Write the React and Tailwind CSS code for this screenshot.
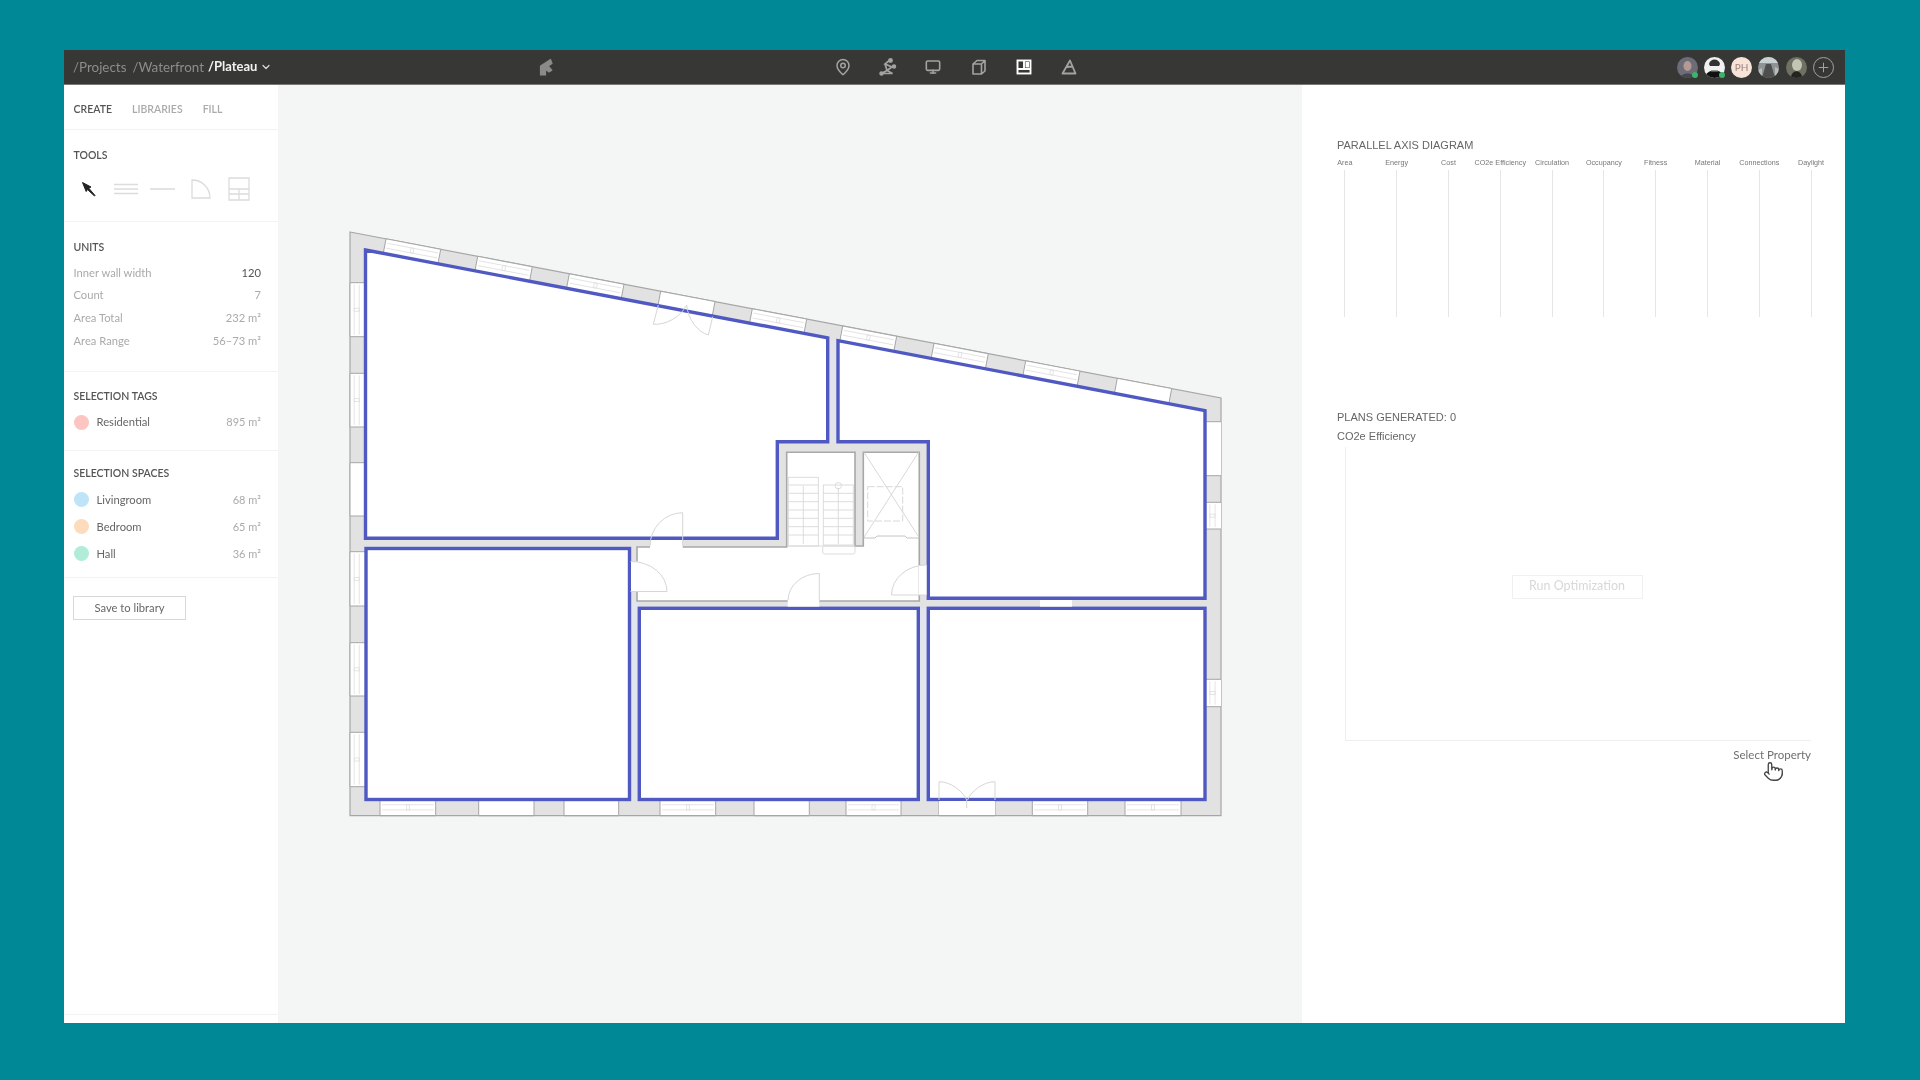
import { MapPin, Monitor, Pointer, ChevronDown, Plus } from 'lucide-react'

const FONT = 'font-["Lato","Open_Sans",sans-serif]'

const AXES = ['Area', 'Energy', 'Cost', 'CO2e Efficiency', 'Circulation', 'Occupancy', 'Fitness', 'Material', 'Connections', 'Daylight']

const UNITS = [
  { label: 'Inner wall width', value: '120', dark: true },
  { label: 'Count', value: '7' },
  { label: 'Area Total', value: '232 m²' },
  { label: 'Area Range', value: '56–73 m²' },
]

const SPACES = [
  { label: 'Livingroom', value: '68 m²', dot: 'bg-[#bfe3f7]' },
  { label: 'Bedroom', value: '65 m²', dot: 'bg-[#fcdcbd]' },
  { label: 'Hall', value: '36 m²', dot: 'bg-[#b0ecd8]' },
]

const SLOPE = 166 / 871
const ANGLE = (Math.atan(SLOPE) * 180) / Math.PI
const slopeY = (x) => 232 + (x - 350) * SLOPE

// [start, end, plain] along each outer edge
const TOP_OPENINGS = [[386, 440.7], [477.7, 532.3], [569.3, 624], [660.7, 715, true], [752.3, 806.7], [842.7, 896.7], [934, 988.3], [1025.7, 1080], [1117.3, 1171.7, true]]
const LEFT_OPENINGS = [[282.7, 336.7], [373.3, 427], [462.7, 516, true], [551.7, 606], [642.7, 696], [732.3, 786.7]]
const BOTTOM_OPENINGS = [[380, 435.7], [478.7, 534, true], [564, 618.7, true], [660, 715.7], [754, 809.3, true], [846, 901], [939, 995, true], [1032.3, 1087.7], [1125, 1181]]
const RIGHT_OPENINGS = [[421.7, 475.7, true], [502.3, 529], [679.3, 706.7]]

function Opening({ x, y, rotate, length, depth, plain }) {
  return (
    <g transform={`translate(${x} ${y}) rotate(${rotate})`}>
      <rect width={length} height={depth} fill="#fff" />
      <path d={`M0 0H${length}M0 0V${depth}M${length} 0V${depth}`} stroke="#a6a6a6" strokeWidth="1" fill="none" />
      {!plain && (
        <g stroke="#dedede" strokeWidth="0.8" fill="none">
          <path d={`M2 ${depth * 0.28}H${length - 2}M2 ${depth * 0.62}H${length - 2}`} />
          <rect x={length / 2 - 1.5} y={depth * 0.28} width="3" height={depth * 0.34} />
        </g>
      )}
    </g>
  )
}

function FloorPlan() {
  return (
    <svg viewBox="278 85 1024 938" className="block w-full h-full">
      <polygon points="350,232 1221,398 1221,815.7 350,815.7" fill="#e1e2e1" stroke="#a6a6a6" strokeWidth="1.2" />
      <rect x="630" y="600" width="9" height="200" fill="#e2e4ee" />
      <rect x="919" y="608" width="9" height="192" fill="#e2e4ee" />
      <rect x="828" y="340" width="10" height="102" fill="#e2e4ea" />

      {TOP_OPENINGS.map(([a, b, plain]) => (
        <Opening key={a} x={a} y={slopeY(a)} rotate={ANGLE} length={(b - a) * 1.018} depth={14.7} plain={plain} />
      ))}
      {LEFT_OPENINGS.map(([a, b, plain]) => (
        <Opening key={a} x={350} y={b} rotate={-90} length={b - a} depth={15} plain={plain} />
      ))}
      {BOTTOM_OPENINGS.map(([a, b, plain]) => (
        <g key={a}>
          <Opening x={a} y={800.5} rotate={0} length={b - a} depth={15.2} plain={plain} />
          <path d={`M${a} 815.7H${b}`} stroke="#a6a6a6" strokeWidth="1.2" />
        </g>
      ))}
      {RIGHT_OPENINGS.map(([a, b, plain]) => (
        <Opening key={a} x={1205.5} y={b} rotate={-90} length={b - a} depth={15.5} plain={plain} />
      ))}

      {/* hall and core */}
      <polygon
        points="637,547 786.7,547 786.7,452.3 855,452.3 855,546 863.3,546 863.3,452.3 919.3,452.3 919.3,601 637,601"
        fill="#fff" stroke="#a8a8a8" strokeWidth="1.6"
      />

      {/* rooms */}
      <g fill="#fff" stroke="#5059c2" strokeWidth="3.4">
        <polygon points="365.5,250 827.7,337.9 827.7,441.7 777.3,441.7 777.3,538.3 365.5,538.3" />
        <polygon points="838,340.7 1205,410.6 1205,598.3 928.3,598.3 928.3,441.7 838,441.7" />
        <rect x="366" y="548.5" width="263.5" height="251" />
        <rect x="639.3" y="608.3" width="279" height="191.2" />
        <rect x="928.3" y="608.3" width="276.7" height="191.2" />
      </g>

      {/* openings in the inner walls */}
      <g fill="#fff">
        <rect x="650" y="540" width="32.7" height="8.2" />
        <rect x="631" y="561.5" width="7" height="30" />
        <rect x="787.7" y="600" width="31.6" height="6.6" />
        <rect x="918.5" y="565" width="8" height="30" />
        <rect x="1040" y="600" width="32" height="6.6" />
        <rect x="939" y="801" width="56" height="14" />
      </g>

      {/* doors */}
      <g fill="none" stroke="#d6d6d6" strokeWidth="1">
        <path d="M682.7 546V512.7A33 33 0 0 0 650 546" />
        <path d="M630.5 561.5A36 30 0 0 1 667 591.5H630.5" />
        <path d="M819.3 600V573.5A31 27 0 0 0 788 600" />
        <path d="M926.5 565A35 30 0 0 0 891.5 595H926.5" />
        <path d="M939 800V781.7C950 781.7 962 790 966.7 800M995 800V781.7C984 781.7 972 790 967.5 800M966.7 800V808" />
        <path d="M658.3 305L653.3 324.3C665 325 680 318 686.7 305M712.7 316.7L708.3 335C698 332 688 320 686.7 305" />
      </g>

      {/* stairs */}
      <g fill="none" stroke="#d8d8d8" strokeWidth="0.9">
        <rect x="788.3" y="477.3" width="30" height="68.7" />
        <rect x="823.3" y="485" width="30" height="60" />
        <path d="M788.3 485H818.3M788.3 493.3H818.3M788.3 501.7H818.3M788.3 510H818.3M788.3 518.3H818.3M788.3 526.7H818.3M788.3 535H818.3" />
        <path d="M823.3 493.3H853.3M823.3 501.7H853.3M823.3 510H853.3M823.3 518.3H853.3M823.3 526.7H853.3M823.3 535H853.3" />
        <path d="M803.3 486V544M838.3 488V544" />
        <circle cx="838.3" cy="485.7" r="3.2" />
        <rect x="822.7" y="546" width="32.3" height="8" rx="2" />
        <path d="M788.3 546H855" />
      </g>

      {/* lift */}
      <g fill="none" stroke="#d4d4d4" strokeWidth="0.9">
        <path d="M864 452.3L919 537.3M918.5 452.3L864 537.3" />
        <rect x="867.7" y="486.7" width="35" height="34.3" strokeDasharray="7 2" />
        <path d="M863.5 538H875L877 536H905L907 538H919" stroke="#bdbdbd" />
      </g>
    </svg>
  )
}

function Logo() {
  return (
    <svg width="20" height="20" viewBox="0 0 20 20" fill="#8b8b8a" stroke="#8b8b8a" strokeWidth="1.2" strokeLinejoin="round">
      <path d="M4.5 18V9L14.5 2.5L16 6.5L12.2 9L15.8 13.2L13 15L9.5 12.2V18Z" />
    </svg>
  )
}

function NavIcons() {
  const cls = 'w-[20px] h-[20px] text-[#a3a3a1]'
  return (
    <div className="flex items-center gap-[25.2px]">
      <div className="flex items-center justify-center w-[20px] h-[20px]">
        <MapPin className="w-[18px] h-[18px] text-[#a3a3a1]" strokeWidth={2} />
      </div>
      <svg viewBox="0 0 20 20" className={cls} fill="none" stroke="currentColor" strokeWidth="1.7">
        <path d="M12.5 2.5L7 7L14 10L9 13.5L14.5 16.5H3.5L9 13.5L7 7" />
        <circle cx="12.5" cy="3.5" r="1.6" fill="currentColor" />
        <circle cx="3.5" cy="16.5" r="1.4" fill="currentColor" />
        <circle cx="16" cy="9.5" r="1.4" fill="currentColor" />
      </svg>
      <div className="flex items-center justify-center w-[20px] h-[20px]">
        <Monitor className="w-[16px] h-[16px] text-[#a3a3a1]" strokeWidth={2.4} />
      </div>
      <svg viewBox="0 0 20 20" className={cls} fill="none" stroke="currentColor" strokeWidth="1.6" strokeLinejoin="round">
        <path d="M4 7L8 3.5H16V14L12.5 17H4ZM4 7H12.5V17M12.5 7L16 3.5" />
      </svg>
      <svg viewBox="0 0 20 20" className="w-[20px] h-[20px] text-white" fill="none" stroke="currentColor" strokeWidth="1.9">
        <rect x="3.5" y="3.5" width="13" height="13" />
        <path d="M10 3.5V12M3.5 12H16.5" />
        <path d="M11.5 5H15V10.5H11.5Z" fill="currentColor" stroke="none" />
      </svg>
      <svg viewBox="0 0 20 20" className={cls} fill="none" stroke="currentColor" strokeWidth="1.8" strokeLinejoin="round">
        <path d="M3.5 16.5L11 3.5L16.5 16.5ZM7.5 10L13.5 9.5" />
      </svg>
    </div>
  )
}

function Avatars() {
  return (
    <div className="ml-auto mr-[11px] flex items-center gap-[6.3px]">
      <div className="relative w-[21px] h-[21px]">
        <svg viewBox="0 0 21 21" className="w-full h-full rounded-full">
          <rect width="21" height="21" fill="#6c6d76" />
          <ellipse cx="10.5" cy="9" rx="4" ry="5" fill="#b49a93" />
          <path d="M3 21C4 15 17 15 18 21Z" fill="#46464f" />
        </svg>
        <span className="absolute right-[0px] bottom-[0px] w-[6px] h-[6px] rounded-full bg-[#3bb36b]" />
      </div>
      <div className="relative w-[21px] h-[21px]">
        <svg viewBox="0 0 21 21" className="w-full h-full rounded-full">
          <rect width="21" height="21" fill="#f1f1f1" />
          <path d="M5 7C6 1 15 1 16 7L15 9H6Z" fill="#333" />
          <path d="M1 21C1 11 20 11 20 21Z" fill="#111" />
          <rect x="7" y="13" width="7" height="1.5" fill="#999" />
        </svg>
        <span className="absolute right-[0px] bottom-[0px] w-[6px] h-[6px] rounded-full bg-[#3bb36b]" />
      </div>
      <div className="flex items-center justify-center w-[21px] h-[21px] rounded-full bg-[#f8e3d9] text-[10px] leading-none text-[#9c8580]">PH</div>
      <svg viewBox="0 0 21 21" className="w-[21px] h-[21px] rounded-full">
        <rect width="21" height="21" fill="#8d9493" />
        <path d="M0 6H21V0H0Z" fill="#c9d2d2" />
        <path d="M4 21L8 7H13L17 21Z" fill="#4c4f4e" />
        <path d="M0 21V13L4 11V21ZM21 21V12L17 10V21Z" fill="#b9bdbb" />
      </svg>
      <svg viewBox="0 0 21 21" className="w-[21px] h-[21px] rounded-full">
        <rect width="21" height="21" fill="#6f7263" />
        <ellipse cx="11" cy="8" rx="5" ry="6" fill="#c4c5b4" />
        <path d="M5 21C5 12 16 12 16 21Z" fill="#23231f" />
      </svg>
      <div className="flex items-center justify-center w-[21px] h-[21px] rounded-full border-[1.5px] border-[#a3a3a1]">
        <Plus className="w-[15px] h-[15px] text-[#a3a3a1]" strokeWidth={1.6} />
      </div>
    </div>
  )
}

function TopBar() {
  return (
    <div className="flex items-center h-[35px] shrink-0 bg-[#373736] border-b border-[#777]">
      <div className="flex items-center w-[472px] pl-[9px] text-[13.4px] text-[#8d8d8b]">
        <span>/Projects</span>
        <span className="ml-[6px]">/Waterfront</span>
        <span className="ml-[4px] text-[13px] font-bold text-[#f2f2f0]">/Plateau</span>
        <ChevronDown className="ml-[3px] w-[12px] h-[12px] text-[#ddd]" strokeWidth={2.4} />
      </div>
      <Logo />
      <div className="ml-[277px]">
        <NavIcons />
      </div>
      <Avatars />
    </div>
  )
}

function SectionTitle({ children }) {
  return <div className="h-[14px] leading-[14px] text-[10.5px] font-semibold text-[#555]">{children}</div>
}

function ColorRow({ dot, label, value, height }) {
  return (
    <div className={'flex items-center justify-between ' + height}>
      <div className="flex items-center">
        <span className={'w-[15px] h-[15px] rounded-full ' + dot} />
        <span className="ml-[8px] text-[11.2px] text-[#666]">{label}</span>
      </div>
      <span className="text-[11px] text-[#aaa]">{value}</span>
    </div>
  )
}

function ToolIcons() {
  return (
    <div className="flex items-center mt-[14px] h-[26px] pl-[6px]">
      <svg width="18" height="18" viewBox="0 0 18 18" fill="#222" stroke="#222" strokeWidth="1">
        <path d="M2.5 2.5L11 7L8.8 8.2L15 15.5L14.5 16L7.5 9.5L6.2 11.5Z" />
      </svg>
      <svg width="24" height="12" viewBox="0 0 24 12" fill="none" stroke="#dcdcdc" strokeWidth="1.3" className="ml-[16px]">
        <path d="M0 1.5H24M0 6H24M0 10.5H24" />
      </svg>
      <svg width="25" height="4" viewBox="0 0 25 4" fill="none" stroke="#dcdcdc" strokeWidth="1.6" className="ml-[12px]">
        <path d="M0 2H25" />
      </svg>
      <svg width="20" height="20" viewBox="0 0 20 20" fill="none" stroke="#dcdcdc" strokeWidth="1.3" className="ml-[16px]">
        <path d="M1 1V19H19C19 9 11 1 1 1Z" />
      </svg>
      <svg width="22" height="24" viewBox="0 0 22 24" fill="none" stroke="#dcdcdc" strokeWidth="1.3" className="ml-[17px]">
        <path d="M1 1H21V23H1ZM1 12H21M11 12V23M1 17H21" />
      </svg>
    </div>
  )
}

function Sidebar() {
  return (
    <div className="flex flex-col w-[214px] shrink-0 bg-white">
      <div className="flex items-center gap-[20px] h-[45px] pt-[6px] px-[9.5px] border-b border-[#f3f3f3] text-[10.5px] font-semibold text-[#aaa]">
        <span className="text-[#555]">CREATE</span>
        <span>LIBRARIES</span>
        <span>FILL</span>
      </div>
      <div className="h-[92px] pt-[18px] px-[9.5px] border-b border-[#f3f3f3]">
        <SectionTitle>TOOLS</SectionTitle>
        <ToolIcons />
      </div>
      <div className="h-[150px] pt-[17.5px] px-[9.5px] pr-[17px] border-b border-[#f3f3f3]">
        <SectionTitle>UNITS</SectionTitle>
        <div className="mt-[8.5px]">
          {UNITS.map((row) => (
            <div key={row.label} className="flex items-center justify-between h-[22.6px] text-[11.2px] text-[#aaa]">
              <span>{row.label}</span>
              <span className={row.dark ? 'text-[#555]' : ''}>{row.value}</span>
            </div>
          ))}
        </div>
      </div>
      <div className="h-[79px] pt-[17px] px-[9.5px] pr-[17px] border-b border-[#f3f3f3]">
        <SectionTitle>SELECTION TAGS</SectionTitle>
        <div className="mt-[6px]">
          <ColorRow dot="bg-[#fcc5c2]" label="Residential" value="895 m²" height="h-[27px]" />
        </div>
      </div>
      <div className="h-[127px] pt-[15px] px-[9.5px] pr-[17px] border-b border-[#f3f3f3]">
        <SectionTitle>SELECTION SPACES</SectionTitle>
        <div className="mt-[6.5px]">
          {SPACES.map((row) => (
            <ColorRow key={row.label} dot={row.dot} label={row.label} value={row.value} height="h-[27px]" />
          ))}
        </div>
      </div>
      <div className="flex-1 pt-[18px] px-[9px]">
        <div className="flex items-center justify-center w-[113px] h-[24px] border border-[#d8d8d8] text-[11.2px] text-[#666]">Save to library</div>
      </div>
      <div className="h-[1px] mb-[8px] bg-[#f3f3f3]" />
    </div>
  )
}

function RightPanel() {
  return (
    <div className={'relative w-[543px] shrink-0 bg-white pl-[35px] pt-[52px] font-["Liberation_Sans",sans-serif] text-[#666]'}>
      <div className="h-[16px] leading-[16px] text-[11px]">PARALLEL AXIS DIAGRAM</div>
      <div className="grid grid-cols-10 w-[518px] ml-[-18px] mt-[3px]">
        {AXES.map((axis) => (
          <div key={axis} className="flex flex-col items-center">
            <span className="h-[14px] leading-[14px] text-[7.2px] whitespace-nowrap text-[#777]">{axis}</span>
            <span className="w-[1px] h-[147px] bg-[#e6e6e6]" />
          </div>
        ))}
      </div>
      <div className="mt-[92px] h-[16px] leading-[16px] text-[11px]">PLANS GENERATED: 0</div>
      <div className="mt-[3px] h-[16px] leading-[16px] text-[11px]">CO2e Efficiency</div>
      <div className="flex items-center justify-center ml-[8px] mt-[3px] w-[466px] h-[294px] border-l border-b border-[#eeeeee]">
        <div className={'flex items-center justify-center w-[131px] h-[24px] mb-[14px] mr-[3px] border border-[#f0f0f0] text-[12.5px] text-[#d8d8d8] ' + FONT}>Run Optimization</div>
      </div>
      <div className={'mt-[6px] w-[474px] text-right text-[11.5px] leading-[16px] text-[#6f6f6f] ' + FONT}>Select Property</div>
      <Pointer className="absolute left-[461px] top-[675px] w-[21px] h-[23px] text-[#444] fill-white" strokeWidth={1.5} />
    </div>
  )
}

export default function App() {
  return (
    <div className={'w-[1920px] h-[1080px] overflow-hidden bg-[#008896] pt-[50px] pl-[64px] ' + FONT}>
      <div className="flex flex-col w-[1781px] h-[973px] blur-[0.35px]">
        <TopBar />
        <div className="flex flex-1 min-h-0">
          <Sidebar />
          <div className="w-[1024px] shrink-0 bg-[#f4f6f5]">
            <FloorPlan />
          </div>
          <RightPanel />
        </div>
      </div>
    </div>
  )
}
